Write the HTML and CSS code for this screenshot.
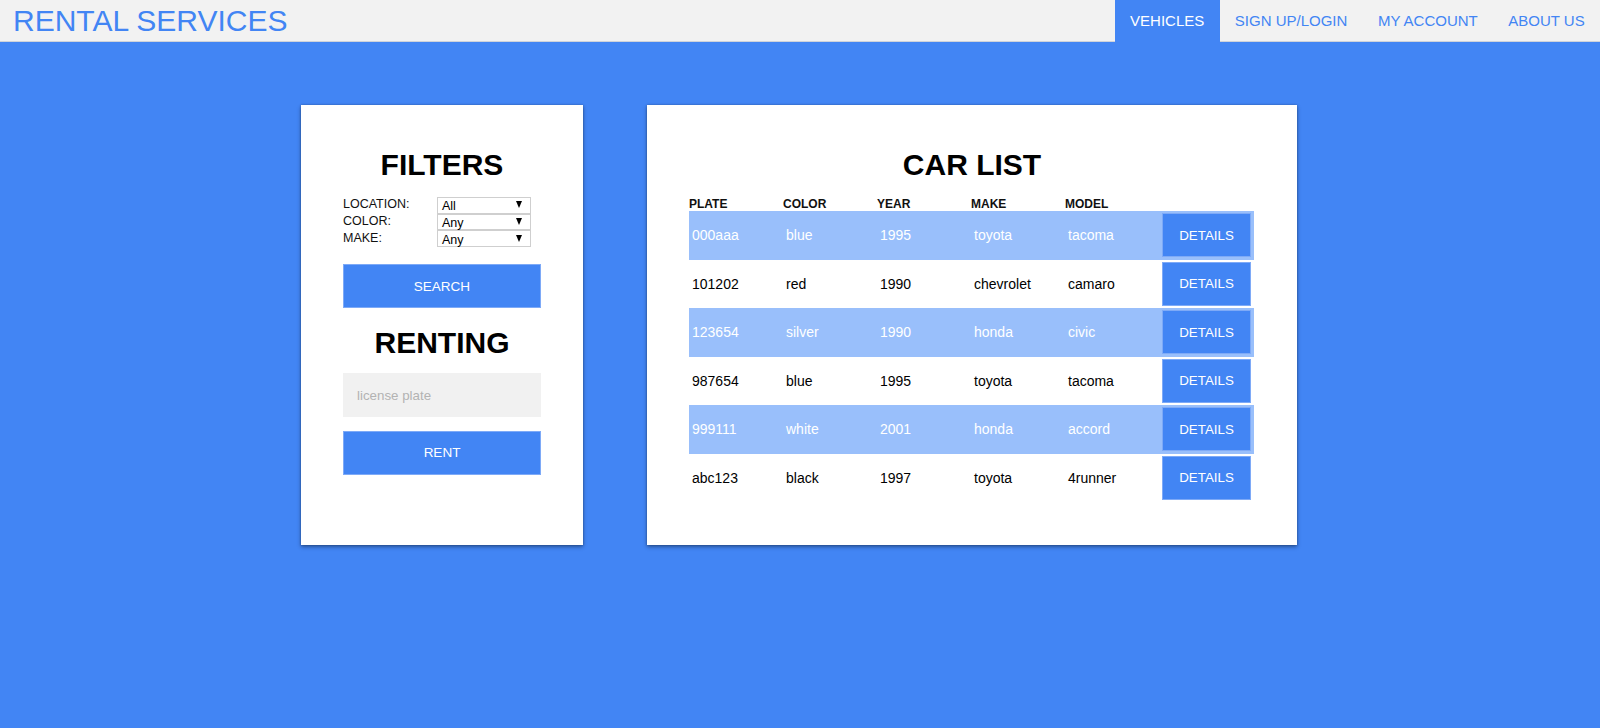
FILE: index.html
```html
<!DOCTYPE html>
<html lang="en">
<head>
<meta charset="utf-8">
<title>Rental Services</title>
<link rel="stylesheet" href="styles.css">
</head>
<body>
<header class="topbar">
  <div class="brand">RENTAL SERVICES</div>
  <nav class="nav">
    <a class="nav-item active">VEHICLES</a>
    <a class="nav-item">SIGN UP/LOGIN</a>
    <a class="nav-item">MY ACCOUNT</a>
    <a class="nav-item">ABOUT US</a>
  </nav>
</header>
<main class="content">
  <section class="card filters-card">
    <h2 class="card-title">FILTERS</h2>
    <div class="filter-grid">
      <span class="filter-label">LOCATION:</span>
      <div class="fake-select"><span>All</span><i class="caret"></i></div>
      <span class="filter-label">COLOR:</span>
      <div class="fake-select"><span>Any</span><i class="caret"></i></div>
      <span class="filter-label">MAKE:</span>
      <div class="fake-select"><span>Any</span><i class="caret"></i></div>
    </div>
    <button class="btn btn-search">SEARCH</button>
    <h2 class="card-title renting-title">RENTING</h2>
    <input class="plate-input" type="text" placeholder="license plate">
    <button class="btn btn-rent">RENT</button>
  </section>
  <section class="card list-card">
    <h2 class="card-title">CAR LIST</h2>
    <table class="car-table">
      <colgroup>
        <col class="col-data"><col class="col-data"><col class="col-data"><col class="col-data"><col class="col-data"><col class="col-action">
      </colgroup>
      <thead>
        <tr><th>PLATE</th><th>COLOR</th><th>YEAR</th><th>MAKE</th><th>MODEL</th><th></th></tr>
      </thead>
      <tbody>
        <tr class="row-alt"><td>000aaa</td><td>blue</td><td>1995</td><td>toyota</td><td>tacoma</td><td class="action"><button class="btn-details">DETAILS</button></td></tr>
        <tr><td>101202</td><td>red</td><td>1990</td><td>chevrolet</td><td>camaro</td><td class="action"><button class="btn-details">DETAILS</button></td></tr>
        <tr class="row-alt"><td>123654</td><td>silver</td><td>1990</td><td>honda</td><td>civic</td><td class="action"><button class="btn-details">DETAILS</button></td></tr>
        <tr><td>987654</td><td>blue</td><td>1995</td><td>toyota</td><td>tacoma</td><td class="action"><button class="btn-details">DETAILS</button></td></tr>
        <tr class="row-alt"><td>999111</td><td>white</td><td>2001</td><td>honda</td><td>accord</td><td class="action"><button class="btn-details">DETAILS</button></td></tr>
        <tr><td>abc123</td><td>black</td><td>1997</td><td>toyota</td><td>4runner</td><td class="action"><button class="btn-details">DETAILS</button></td></tr>
      </tbody>
    </table>
  </section>
</main>
</body>
</html>
```
FILE: styles.css
```css
* { box-sizing: border-box; }

html, body {
  margin: 0;
  padding: 0;
}

body {
  background: #4285f4;
  font-family: "Liberation Sans", Arial, sans-serif;
  color: #000;
  min-height: 728px;
}

.topbar {
  display: flex;
  justify-content: space-between;
  align-items: stretch;
  height: 42px;
  background: #f2f2f2;
  border-bottom: 1px solid #cfd3da;
}

.brand {
  padding-left: 13px;
  font-size: 30px;
  line-height: 41px;
  color: #4285f4;
  white-space: nowrap;
}

.nav {
  display: flex;
  align-items: stretch;
}

.nav-item {
  display: block;
  padding: 0 15.3px;
  font-size: 15px;
  line-height: 41px;
  color: #4285f4;
  text-decoration: none;
  white-space: nowrap;
}

.nav-item.active {
  background: #4285f4;
  color: #fff;
  margin-bottom: -1px;
  line-height: 42px;
}

.content {
  display: flex;
  justify-content: center;
  align-items: flex-start;
  gap: 64px;
  padding-top: 63px;
  padding-right: 2px;
}

.card {
  background: #fff;
  box-shadow: 0 2px 4px rgba(0, 0, 0, 0.38), 0 0 2px rgba(0, 0, 0, 0.25);
  padding: 37px 42px 0;
}

.filters-card {
  width: 282px;
  height: 440px;
}

.list-card {
  width: 650px;
  height: 440px;
}

.card-title {
  margin: 0;
  font-size: 30px;
  line-height: 45px;
  font-weight: bold;
  text-align: center;
  color: #000;
}

.filter-grid {
  display: grid;
  grid-template-columns: 94px 94px;
  grid-auto-rows: 16.7px;
  align-items: center;
  margin-top: 10px;
}

.filter-label {
  font-size: 12.5px;
  line-height: 14px;
  color: #111;
  margin-top: -2px;
}

.fake-select {
  display: flex;
  align-items: center;
  justify-content: space-between;
  height: 16.7px;
  border: 1px solid #cfcfcf;
  background: #fff;
  padding: 0 8px 0 4px;
  font-size: 12.5px;
  color: #000;
}

.fake-select span {
  line-height: 14px;
  padding-top: 2px;
}

.caret {
  display: block;
  width: 0;
  height: 0;
  border-left: 3.5px solid transparent;
  border-right: 3.5px solid transparent;
  border-top: 7px solid #000;
  margin-top: -1px;
}

.btn {
  display: block;
  width: 198px;
  height: 44px;
  background: #4285f4;
  border: 1px solid #7eaaf7;
  color: #fff;
  font-family: "Liberation Sans", Arial, sans-serif;
  font-size: 13.5px;
  padding: 0;
  cursor: pointer;
}

.btn-search {
  margin-top: 17px;
}

.renting-title {
  margin-top: 11.5px;
}

.plate-input {
  display: block;
  width: 198px;
  height: 44px;
  margin-top: 8.5px;
  border: none;
  background: #f1f1f1;
  padding: 0 14px;
  font-family: "Liberation Sans", Arial, sans-serif;
  font-size: 13.33px;
  color: #000;
  outline: none;
}

.plate-input::placeholder {
  color: #b3b3b3;
}

.btn-rent {
  margin-top: 13.5px;
}

.car-table {
  width: 565px;
  margin-top: 9.6px;
  border-collapse: collapse;
  border-spacing: 0;
  table-layout: fixed;
}

.col-data { width: 94px; }
.col-action { width: 95px; }

.car-table th {
  height: 14.4px;
  padding: 0;
  font-size: 12px;
  line-height: 14.4px;
  font-weight: bold;
  text-align: left;
  color: #111;
}

.car-table td {
  padding: 2px 3px;
  height: 48.5px;
  font-size: 14px;
  color: #000;
  vertical-align: middle;
  white-space: nowrap;
}

.car-table .row-alt td {
  background: #99bffb;
  color: #fff;
}

.btn-details {
  display: block;
  width: 89px;
  height: 44px;
  background: #4285f4;
  border: 1px solid #7eaaf7;
  color: #fff;
  font-family: "Liberation Sans", Arial, sans-serif;
  font-size: 13.33px;
  padding: 0;
  cursor: pointer;
}
```
